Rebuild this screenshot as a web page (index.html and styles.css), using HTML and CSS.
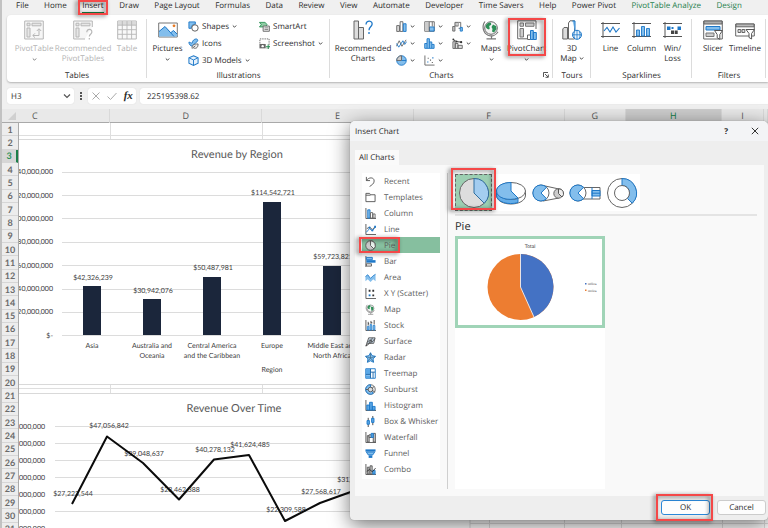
FILE: index.html
```html
<!DOCTYPE html>
<html lang="en">
<head>
<meta charset="utf-8">
<title>Workbook - Insert Chart</title>
<link rel="stylesheet" href="styles.css">
</head>
<body>
<svg class="defs" aria-hidden="true">
  <symbol id="chev" viewBox="0 0 5 5"><path d="M.8 1.5 2.5 3.2 4.2 1.5" fill="none" stroke="#444"/></symbol>
  <symbol id="pivot" viewBox="0 0 20 20"><path d="M.7 1h18.6v18H.7z" fill="#f3f3f3" stroke="#999"/><path d="M3 3.2h3v2.6H3zM8 3.2h9v2.6H8zM3 8h3v9H3z" fill="#ddd" stroke="#999"/><path d="M9 15.5h6V9M12.8 11 15 8.700l2.200 2.300M11 13.300 8.800 15.500 11 17.700" fill="none" stroke="#999"/></symbol>
  <symbol id="recpivot" viewBox="0 0 20 20"><path d="M19.300 7V1H.7v18H12" fill="#f3f3f3" stroke="#999"/><path d="M3 3.200h3v2.600H3zM8 3.200h9v2.600H8zM3 8h3v9H3z" fill="#ddd" stroke="#999"/><path d="M13.800 12.200c0-4 5.600-3.600 5 .2-.3 1.900-2.500 2-2.500 4.200M16.300 18v1.500" fill="none" stroke="#999" stroke-width="1.200"/></symbol>
  <symbol id="table" viewBox="0 0 20 20"><path d="M.7 1h18.600v18H.7z" fill="#f7f7f7" stroke="#999"/><path d="M1 1.500h18v3.500H1z" fill="#ccc"/><path d="M.7 5.200h18.600M.7 9.700h18.600M.7 14.300h18.600M5.300 1v18M10 1v18M14.600 1v18" stroke="#999" stroke-width=".9"/></symbol>
  <symbol id="pictures" viewBox="0 0 20 20"><path d="M.7 3h18.600v14H.7z" fill="#fff" stroke="#777"/><path d="M1 16.500v-5L7 6.500l6 6 2.500-2 3.700 3.500v2.500z" fill="#83beec"/><path d="M1 11.500 7 6.500l9 10M13 12.500l2.500-2L19 14" fill="none" stroke="#1e78c8"/><circle cx="16" cy="5.800" r="1.400" fill="#e87a22"/></symbol>
  <symbol id="shapes" viewBox="0 0 12 12"><path d="M1 1h7v2.500A4 4 0 0 0 3.500 8H1z" fill="#83beec" stroke="#1e78c8"/><circle cx="7.600" cy="7.600" r="3.500" fill="#fff" stroke="#555"/></symbol>
  <symbol id="icons" viewBox="0 0 12 12"><path d="M1 4.500c2 0 2 1.500 3.500 1 .5-3 2.500-4.500 4.500-4.500 2 .3 2 2 1 3L8 5.500 5 9C2.500 8.500 1 7 1 4.500z" fill="#83beec" stroke="#1e78c8"/><path d="M4.500 11.500c-.5-4 2-5 6.500-5 0 3.500-1.500 5.500-5 4.500M5 11l3-2.500" fill="#eee" stroke="#555" stroke-width=".9"/></symbol>
  <symbol id="cube" viewBox="0 0 12 12"><path d="M6 .8 11 3v6L6 11.300 1 9V3z" fill="#e7f2fc" stroke="#1e78c8" stroke-width="1.100"/><path d="M1.300 3.200 6 5.400l4.700-2.200M6 5.400V11" fill="none" stroke="#1e78c8"/></symbol>
  <symbol id="smartart" viewBox="0 0 12 12"><path d="M.5 1.500h6L9 4 6.500 6.500H.5L2.500 4z" fill="#8fcca4" stroke="#1d8a4a" stroke-width=".9"/><path d="M4.500 5.500h6.800v5.700H4.500z" fill="#eee" stroke="#666"/><path d="M6 7.500h4M6 9.300h4" stroke="#666" stroke-width=".8"/></symbol>
  <symbol id="shot" viewBox="0 0 12 12"><path d="M1 6V1h10v10H8" fill="none" stroke="#666" stroke-dasharray="1.500 1"/><path d="M.5 6.500h6.800v4.800H.5z" fill="#666"/><circle cx="4" cy="8.900" r="1.300" fill="#fff"/><path d="M10 7v5M7.500 9.500h4.500" stroke="#1d8a4a"/></symbol>
  <symbol id="recchart" viewBox="0 0 20 20"><path d="M1 1h4.500v18H1zM5.500 7.500h5V19h-5z" fill="#ddd" stroke="#666"/><path d="M13 4.500c.3-5 7-4 6 .2-.5 2.200-3 2.300-3 5.500M16 12v2" fill="none" stroke="#1e78c8" stroke-width="1.300"/></symbol>
  <symbol id="colchart" viewBox="0 0 12 12"><path d="M.8 5h3v6.400h-3z" fill="#ddd" stroke="#666"/><path d="M4.500.8h3v10.600h-3z" fill="#fff" stroke="#666"/><path d="M8 3h3v8.400H8z" fill="#83beec" stroke="#1e78c8"/></symbol>
  <symbol id="linechart" viewBox="0 0 12 12"><path d="M.5 9 3.500 3l3 6 4.500-7" fill="none" stroke="#666"/><path d="M.5 6 3 10l4.500-7L9.500 7l2-3" fill="none" stroke="#1e78c8"/></symbol>
  <symbol id="piechart" viewBox="0 0 12 12"><circle cx="6" cy="6" r="5.200" fill="#83beec" stroke="#1e78c8"/><path d="M6 .8A5.200 5.200 0 0 0 .8 6H6z" fill="#ccc" stroke="#666"/><path d="M6 6h5" stroke="#1e78c8"/></symbol>
  <symbol id="hier" viewBox="0 0 12 12"><path d="M.8.8h10.400v10.400H.8z" fill="#fff" stroke="#666"/><path d="M1 1h4.500v10H1z" fill="#ccc"/><path d="M6 6.500h5v4.500H6z" fill="#83beec" stroke="#1e78c8"/><path d="M5.700 1v10M9 1v5" stroke="#666"/></symbol>
  <symbol id="stat" viewBox="0 0 12 12"><path d="M.8 11.300V6h2.500V.8h2.600v3.500h2.600V7h2.500v4.300z" fill="#83beec" stroke="#1e78c8"/><path d="M3.300 6v5M5.900 4v7M8.500 7v4" stroke="#1e78c8"/></symbol>
  <symbol id="scatter" viewBox="0 0 12 12"><path d="M1 .5V11h10.500" fill="none" stroke="#666"/><path d="M3.500 7h1.300v1.300H3.500zM9 2.500h1.300v1.300H9z" fill="#1e78c8"/><path d="M4 3h1.200v1.200H4zM6.500 5h1.200v1.200H6.500zM8.500 7.500h1.200v1.200H8.500z" fill="#666"/></symbol>
  <symbol id="fall" viewBox="0 0 12 12"><path d="M.8 6h2.400v5H.8zM3.200 1.500h4v4h-4z" fill="#ccc" stroke="#666"/><path d="M7.200 1.500h2.300V8H7.200" fill="#fff" stroke="#666"/><path d="M9 7h2.300v4H9z" fill="#83beec" stroke="#1e78c8"/></symbol>
  <symbol id="combo" viewBox="0 0 12 12"><path d="M1 4h2.500v7.400H1zM3.500 6h3v5.400h-3zM6.500 8h4.700v3.400H6.500z" fill="#ddd" stroke="#666"/><path d="M1 1.500 5 4l5.500.5" fill="none" stroke="#333"/><circle cx="1.500" cy="1.500" r="1" fill="#333"/><circle cx="5" cy="3.800" r="1" fill="#333"/><circle cx="10" cy="4.500" r="1.200" fill="#333"/></symbol>
  <symbol id="globe" viewBox="0 0 20 20"><circle cx="10" cy="8" r="6.300" fill="#f5f5f5" stroke="#666"/><path d="M5 5c2-3 5-3 5-2s1 2-1 2.500 1 3-1 4c-2-.5-4-2-3-4.500zM12 4.500l3 1.500.5 3-2.500 3.500-2-1 .5-2.500-1-2z" fill="#2c8f57"/><path d="M4 1.500C.5 6 2 13 7 15.200c4 1.500 8 0 10-3.500M10.500 16v2.500M5.500 18.800h9.500" fill="none" stroke="#777" stroke-width="1.200"/></symbol>
  <symbol id="pivotchart" viewBox="0 0 20 20"><path d="M19 9V.8H.7v18H10" fill="#fff" stroke="#666"/><path d="M3 3h3.500v3.300H3zM8.500 3H17v3.300H8.500zM3 8.500h3.500V17H3z" fill="#ccc" stroke="#777"/><path d="M10.500 15h3v4.500h-3z" fill="#fff" stroke="#666"/><path d="M13.500 10.500h2.800v9h-2.800zM16.300 12.500h3v7h-3z" fill="#83beec" stroke="#1e78c8"/></symbol>
  <symbol id="map3d" viewBox="0 0 20 20"><path d="M.8 9 2 7.500h3.500V19H.8z" fill="#ddd" stroke="#666"/><path d="M6.500 3 8 .8h4.500V19h-6z" fill="#fff" stroke="#666"/><path d="M10.500 1h2.500v10" fill="#83beec" stroke="#1e78c8"/><circle cx="15" cy="14.800" r="4.500" fill="#e8f3fc" stroke="#1e78c8"/><path d="M10.500 14.800h9M15 10.300v9M12.700 11.500c-1 2-1 5 0 7M17.300 11.500c1 2 1 5 0 7" fill="none" stroke="#1e78c8" stroke-width=".8"/></symbol>
  <symbol id="spline" viewBox="0 0 20 20"><path d="M2 2v16M0 3.500h19M0 16.500h19" stroke="#555" fill="none"/><path d="M3 11l3-3.500 3 4.500 3-5 3 5 3.500-4" fill="none" stroke="#1e78c8" stroke-width="1.100"/></symbol>
  <symbol id="spcol" viewBox="0 0 20 20"><path d="M2 2v16M0 3.500h19M0 16.500h19" stroke="#555"/><path d="M4.500 10h3v6h-3zM9.500 6.500h3V16h-3zM14.500 8.500h3V16h-3z" fill="#83beec" stroke="#1e78c8" stroke-width=".9"/></symbol>
  <symbol id="spwin" viewBox="0 0 20 20"><path d="M2 2v16M0 3.500h19M0 16.500h19" stroke="#555"/><path d="M4 6.500h3.500v3.500H4zM14.500 6.500H18v3.500h-3.500z" fill="#1e78c8"/><path d="M8 10.500h3V14H8zM11.700 10.500h3V14h-3z" fill="#444"/><path d="M8.500 7h2v2h-2z" fill="#1e78c8"/></symbol>
  <symbol id="slicer" viewBox="0 0 20 20"><path d="M.7 1h18.600v18H.7z" fill="#fff" stroke="#666"/><path d="M1 1h18v3H1z" fill="#aaa" stroke="#666"/><path d="M3 6.500h14V10H3z" fill="#83beec" stroke="#1e78c8"/><path d="M3 13h8v3.500H3z" fill="#ccc" stroke="#777"/><path d="M11.500 10.500h8l-2.700 4v4.800l-2.600-1.500v-3.300z" fill="#fff" stroke="#555"/></symbol>
  <symbol id="timeline" viewBox="0 0 20 20"><path d="M.7 4h18.600v12H.7z" fill="#fff" stroke="#666"/><path d="M1 4h18v2.800H1z" fill="#bbb" stroke="#666"/><path d="M3 9.500h2.800v3H3zM7 9.500h2.800v3H7z" fill="#ddd" stroke="#666"/><path d="M11 9.500h8.500l-2.900 4V19l-2.600-1.500v-4z" fill="#fff" stroke="#555"/></symbol>
</svg>

<div class="screen">
  <div class="edge" aria-hidden="true"></div>
  <div class="app">
    <nav class="tabs" aria-label="Ribbon tabs">
      <a href="#">File</a><a href="#">Home</a><a href="#" class="active">Insert<span class="mark mark-tab"></span></a><a href="#">Draw</a><a href="#">Page Layout</a><a href="#">Formulas</a><a href="#">Data</a><a href="#">Review</a><a href="#">View</a><a href="#">Automate</a><a href="#">Developer</a><a href="#">Time Savers</a><a href="#">Help</a><a href="#">Power Pivot</a><a href="#" class="context">PivotTable Analyze</a><a href="#" class="context">Design</a>
    </nav>

    <div class="ribbon">
      <section class="group">
        <div class="tools tables">
          <button class="big" disabled><svg><use href="#pivot"/></svg><span>PivotTable</span><svg class="chev"><use href="#chev"/></svg></button>
          <button class="big" disabled><svg><use href="#recpivot"/></svg><span>Recommended<br>PivotTables</span></button>
          <button class="big" disabled><svg><use href="#table"/></svg><span>Table</span></button>
        </div>
        <h2>Tables</h2>
      </section>
      <section class="group">
        <div class="tools illus">
          <button class="big"><svg><use href="#pictures"/></svg><span>Pictures</span><svg class="chev"><use href="#chev"/></svg></button>
          <div class="stack">
            <button class="small"><svg><use href="#shapes"/></svg>Shapes<svg class="chev"><use href="#chev"/></svg></button>
            <button class="small"><svg><use href="#icons"/></svg>Icons</button>
            <button class="small"><svg><use href="#cube"/></svg>3D Models<svg class="chev"><use href="#chev"/></svg></button>
          </div>
          <div class="stack">
            <button class="small"><svg><use href="#smartart"/></svg>SmartArt</button>
            <button class="small"><svg><use href="#shot"/></svg>Screenshot<svg class="chev"><use href="#chev"/></svg></button>
          </div>
        </div>
        <h2>Illustrations</h2>
      </section>
      <section class="group">
        <div class="tools charts">
          <button class="big"><svg><use href="#recchart"/></svg><span>Recommended<br>Charts</span></button>
          <div class="matrix">
            <button class="small" aria-label="Column chart"><svg><use href="#colchart"/></svg><svg class="chev"><use href="#chev"/></svg></button>
            <button class="small" aria-label="Hierarchy chart"><svg><use href="#hier"/></svg><svg class="chev"><use href="#chev"/></svg></button>
            <button class="small" aria-label="Waterfall chart"><svg><use href="#fall"/></svg><svg class="chev"><use href="#chev"/></svg></button>
            <button class="small" aria-label="Line chart"><svg><use href="#linechart"/></svg><svg class="chev"><use href="#chev"/></svg></button>
            <button class="small" aria-label="Statistic chart"><svg><use href="#stat"/></svg><svg class="chev"><use href="#chev"/></svg></button>
            <button class="small" aria-label="Combo chart"><svg><use href="#combo"/></svg><svg class="chev"><use href="#chev"/></svg></button>
            <button class="small" aria-label="Pie chart"><svg><use href="#piechart"/></svg><svg class="chev"><use href="#chev"/></svg></button>
            <button class="small" aria-label="Scatter chart"><svg><use href="#scatter"/></svg><svg class="chev"><use href="#chev"/></svg></button>
          </div>
          <button class="big"><svg><use href="#globe"/></svg><span>Maps</span><svg class="chev"><use href="#chev"/></svg></button>
          <button class="big"><svg><use href="#pivotchart"/></svg><span>PivotChart</span><svg class="chev"><use href="#chev"/></svg><span class="mark mark-big"></span></button>
        </div>
        <h2>Charts</h2>
        <button class="launcher" aria-label="Chart options"><svg viewBox="0 0 6 6"><path d="M.5 5V.5H5M2 2l3 3M5.300 2.500v2.800H2.500" fill="none" stroke="#444" stroke-width=".9"/></svg></button>
      </section>
      <section class="group">
        <div class="tools tours">
          <button class="big"><svg><use href="#map3d"/></svg><span>3D<br>Map <svg class="chev"><use href="#chev"/></svg></span></button>
        </div>
        <h2>Tours</h2>
      </section>
      <section class="group">
        <div class="tools spark">
          <button class="big"><svg><use href="#spline"/></svg><span>Line</span></button>
          <button class="big"><svg><use href="#spcol"/></svg><span>Column</span></button>
          <button class="big"><svg><use href="#spwin"/></svg><span>Win/<br>Loss</span></button>
        </div>
        <h2>Sparklines</h2>
      </section>
      <section class="group">
        <div class="tools filters">
          <button class="big"><svg><use href="#slicer"/></svg><span>Slicer</span></button>
          <button class="big"><svg><use href="#timeline"/></svg><span>Timeline</span></button>
        </div>
        <h2>Filters</h2>
      </section>
    </div>

    <div class="formula-bar">
      <div class="name-box"><input type="text" value="H3" aria-label="Name box"><svg viewBox="0 0 8 8"><path d="M1 2.500 4 5.500 7 2.500" fill="none" stroke="#555" stroke-width="1.200"/></svg></div>
      <svg class="dots" viewBox="0 0 2 8"><path d="M0 0h2v2H0zM0 3h2v2H0zM0 6h2v2H0z" fill="#555"/></svg>
      <div class="fx-box">
        <button aria-label="Cancel entry"><svg viewBox="0 0 10 10"><path d="m1.500 1.500 7 7M8.500 1.500l-7 7" stroke="#aaa"/></svg></button>
        <button aria-label="Confirm entry"><svg viewBox="0 0 10 10"><path d="M.5 5.500 3.500 8.500 9.500 2" fill="none" stroke="#aaa"/></svg></button>
        <button class="fx">fx</button>
      </div>
      <input class="formula" type="text" value="225195398.62" aria-label="Formula bar">
    </div>

    <div class="columns">
      <div class="corner"><svg viewBox="0 0 8 8"><path d="M8 0v8H0z" fill="#d0d0d0"/></svg></div>
      <span class="partial">C</span><span>D</span><span>E</span><span>F</span><span>G</span><span class="sel">H</span><span>I</span><span></span>
    </div>

    <div class="sheet">
      <div class="rows">
        <span>1</span><span>2</span><span class="sel">3</span><span>4</span><span>5</span><span>6</span><span>7</span><span>8</span><span>9</span><span>10</span><span>11</span><span>12</span><span>13</span><span>14</span><span>15</span><span>16</span><span>17</span><span>18</span><span>19</span><span>20</span><span>21</span><span>22</span><span>23</span><span>24</span><span>25</span><span>26</span><span>27</span><span>28</span><span>29</span><span>30</span><span>31</span>
      </div>
      <div class="cells">
        <svg class="plot" width="749" height="413" viewBox="19 123 749 413">
          <path class="cell-line" d="M19 135.500H768M19 388.500H768M110.500 123V536M262.500 123V536M413.500 123V536M489.500 520V536M564.500 123V536M621.500 520V536M722.500 123V536M764.500 123V536M19 523.500H768"/>
          <rect class="object" x="-10" y="139.500" width="480" height="245"/>
          <rect class="object" x="-10" y="393.500" width="480" height="180"/>

          <path class="axis" d="M62 172.500H470M62 195.500H470M62 218.500H470M62 242.500H470M62 265.500H470M62 289.500H470M62 312.500H470M62 335.500H470"/>
          <text class="title" x="237" y="158">Revenue by Region</text>
          <g class="scale"><text x="53" y="174">40,000,000</text><text x="53" y="198">20,000,000</text><text x="53" y="221">00,000,000</text><text x="53" y="244">80,000,000</text><text x="53" y="268">60,000,000</text><text x="53" y="291">40,000,000</text><text x="53" y="314">20,000,000</text><text x="53" y="338">$-</text></g>
          <g class="bars"><rect x="83" y="286" width="18" height="49"/><rect x="143" y="299" width="18" height="36"/><rect x="203" y="277" width="18" height="58"/><rect x="263" y="202" width="18" height="133"/><rect x="323" y="266" width="18" height="69"/></g>
          <g class="label">
            <text x="93" y="280">$42,326,239</text><text x="153" y="293">$30,942,076</text><text x="213" y="270">$50,487,981</text><text x="273" y="195">$114,542,721</text><text x="333" y="259">$59,723,821</text>
            <text x="92" y="348">Asia</text><text x="152" y="348">Australia and</text><text x="152" y="358">Oceania</text><text x="212" y="348">Central America</text><text x="212" y="358">and the Caribbean</text><text x="272" y="348">Europe</text><text x="332" y="348">Middle East and</text><text x="332" y="358">North Africa</text><text class="axis-name" x="272" y="372">Region</text>
          </g>

          <path class="axis" d="M55 426.500H470M55 443.500H470M55 460.500H470M55 477.500H470M55 494.500H470M55 511.500H470"/>
          <text class="title" x="234" y="412">Revenue Over Time</text>
          <g class="scale"><text x="45" y="429">000,000</text><text x="45" y="446">000,000</text><text x="45" y="463">000,000</text><text x="45" y="480">000,000</text><text x="45" y="497">000,000</text><text x="45" y="514">000,000</text><text x="45" y="531">000,000</text></g>
          <g class="label"><text x="73" y="496">$27,223,544</text><text x="109" y="428">$47,056,842</text><text x="144" y="456">$39,048,637</text><text x="180" y="492">$28,462,388</text><text x="215" y="452">$40,278,132</text><text x="250" y="447">$41,624,485</text><text x="286" y="512">$22,309,588</text><text x="321" y="494">$27,568,617</text><text x="357" y="482">$31,204,190</text></g>
          <path class="trend" d="M72 504 107 436.500 143 463 179 499.500 214 459.500 249 455 285 521 320 503 352 491.500"/>
        </svg>
      </div>
    </div>
  </div>

  <div class="dialog" role="dialog" aria-labelledby="dlg-title">
    <header>
      <h1 id="dlg-title">Insert Chart</h1>
      <button class="help" aria-label="Help">?</button>
      <button aria-label="Close"><svg viewBox="0 0 8 8"><path d="m.8.8 6.400 6.400M7.200.8.8 7.200" stroke="#333"/></svg></button>
    </header>
    <div class="dialog-tabs"><button>All Charts</button></div>
    <div class="panel">
      <div class="list">
        <button><svg viewBox="0 0 12 12"><path d="M1.500 1v4h4M1.500 5C4 1 10 1 10 5.500 10 8.500 7 10 5 11.500" fill="none" stroke="#555"/></svg>Recent</button>
        <button><svg viewBox="0 0 12 12"><path d="M1 10.500v-9h4l1 1.500h5v7.500zM1 3.500h5" fill="none" stroke="#555"/></svg>Templates</button>
        <button><svg viewBox="0 0 12 12"><path d="M1 0v11.500h11" fill="none" stroke="#555"/><path d="M3 2h2.500v9H3z" fill="#83beec" stroke="#1e78c8"/><path d="M6 5h2.300v6H6zM8.800 6.500h2.200V11H8.800z" fill="#fff" stroke="#666"/></svg>Column</button>
        <button><svg viewBox="0 0 12 12"><path d="M1 0v11.500h11" fill="none" stroke="#555"/><path d="m1.500 9 3.500-4 3 2.500L11.500 3" fill="none" stroke="#1e78c8"/><path d="m2 5 3-1.500L8 6l3-3" fill="none" stroke="#555"/><path d="M4 3h2v2H4zM7 6h2v2H7zM10 2h2v2h-2z" fill="#1e78c8"/></svg>Line</button>
        <button class="picked"><svg viewBox="0 0 12 12"><circle cx="6" cy="6" r="5.200" fill="#c9c9c9" stroke="#555"/><path d="M6 .8A5.200 5.200 0 0 1 9.700 9.700L6 6z" fill="#e8f1ec" stroke="#555"/></svg>Pie<span class="mark mark-item"></span></button>
        <button><svg viewBox="0 0 12 12"><path d="M1 0v12" stroke="#555"/><path d="M1.500 1.500H8V4H1.500z" fill="#83beec" stroke="#1e78c8"/><path d="M1.500 4.500h10v2.800h-10z" fill="#1e78c8"/><path d="M1.500 8.500H7V11H1.500z" fill="#fff" stroke="#555"/></svg>Bar</button>
        <button><svg viewBox="0 0 12 12"><path d="M.5 10V5L3 3l3 4 3-3 2.500-1.500V10L9 8l-3 3-3-3z" fill="#83beec"/><path d="m.5 5 2.500-2 3 4 3-3 2.500-1.500" fill="none" stroke="#1e78c8" stroke-width=".9"/></svg>Area</button>
        <button><svg viewBox="0 0 12 12"><path d="M1 0v11.500h11" fill="none" stroke="#555"/><path d="M4 2h2v2H4zM8 2h2v2H8zM8 7h2v2H8z" fill="#333"/><path d="M4 7h2v2H4z" fill="#1e78c8"/></svg>X Y (Scatter)</button>
        <button><svg viewBox="0 0 20 20"><use href="#globe"/></svg>Map</button>
        <button><svg viewBox="0 0 12 12"><path d="M1 0v11.500h11" fill="none" stroke="#555"/><path d="M2.500 7h1.800v4H2.500zM5.500 5h1.800v6H5.500zM8.800 6h2v5h-2z" fill="#83beec" stroke="#1e78c8" stroke-width=".8"/><path d="M3.500 2v4M6.500 1v3M10 0v5M3.500 4h1M6.500 3h1.500" stroke="#333" stroke-width=".9"/></svg>Stock</button>
        <button><svg viewBox="0 0 12 12"><path d="M1 11 4 2h7l-1.500 6H3z" fill="#cfe3f5" stroke="#555"/><path d="m2.500 7 3-3 2 3 3-4M1 11l3-2 2-5M6 8l2-6" fill="none" stroke="#444" stroke-width=".9"/></svg>Surface</button>
        <button><svg viewBox="0 0 12 12"><path d="m6 .8 1.700 3.200 3.800.7-2.700 2.800.6 3.800L6 9.600l-3.400 1.700.6-3.800L.5 4.700 4.300 4z" fill="#83beec" stroke="#1e78c8"/><path d="M6 1v5.500L11 5M6 6.500l3 4M6 6.500l-3 4M6 6.500 1 5" stroke="#35617f" stroke-width=".7" fill="none"/></svg>Radar</button>
        <button><svg viewBox="0 0 12 12"><path d="M.8.8h10.400v10.400H.8z" fill="#fff" stroke="#1e78c8"/><path d="M1 1h5v6H1zM1 8h5v3H1z" fill="#5aa7e6"/><path d="M6 1v10M1 7h5M6 4.500h5M8.800 4.500V11" stroke="#1b66a8"/></svg>Treemap</button>
        <button><svg viewBox="0 0 12 12"><circle cx="6" cy="6" r="5.200" fill="#eee" stroke="#666"/><path d="M6 .8a5.200 5.200 0 1 0 3 9.400L6 6z" fill="#83beec" stroke="#1e78c8"/><circle cx="6" cy="6" r="2.500" fill="#ddd" stroke="#555"/><path d="m8 7 3 2M8 4.500 10 2.500M3.500 6H1" stroke="#555"/></svg>Sunburst</button>
        <button><svg viewBox="0 0 12 12"><path d="M1 0v11.500h11" fill="none" stroke="#555"/><path d="M2 5.500h3V11H2zM5 2.500h3V11H5zM8 7h3v4H8z" fill="#5aa7e6" stroke="#1e78c8"/></svg>Histogram</button>
        <button><svg viewBox="0 0 12 12"><path d="M3.500 2v10M8.500 0v10" stroke="#444"/><path d="M2.200 5h2.600v4H2.200zM7.200 2.500h2.600v4.500H7.200z" fill="#5aa7e6" stroke="#1e78c8"/></svg>Box &amp; Whisker</button>
        <button><svg viewBox="0 0 12 12"><path d="M1 0v11.500h11" fill="none" stroke="#555"/><path d="M2.500 4h2v7h-2zM9 1.500h2.300V11H9z" fill="#ccc" stroke="#555"/><path d="M4.500 3h2.200v3H4.500z" fill="#fff" stroke="#555"/><path d="M6.700 1.500H9V6H6.700z" fill="#5aa7e6" stroke="#1e78c8"/></svg>Waterfall</button>
        <button><svg viewBox="0 0 12 12"><path d="M.5 1.500h11V4H.5z" fill="#1e78c8"/><path d="M1.500 4.500h9L8.500 7.500h-5z" fill="#83beec" stroke="#1e78c8"/><path d="M4 8h4v2.800H4z" fill="#1e78c8"/></svg>Funnel</button>
        <button><svg viewBox="0 0 12 12"><path d="M1 0v11.500h11" fill="none" stroke="#555"/><path d="M2.500 3.500h2V11h-2zM5.500 2h2.300v9H5.500z" fill="#ccc" stroke="#555"/><path d="M8.500 7H11v4H8.500z" fill="#5aa7e6" stroke="#1e78c8"/><path d="m2 8 3-2 3 2.500 3.500-4" fill="none" stroke="#333"/></svg>Combo</button>
      </div>
      <div class="detail">
        <div class="types">
          <button class="picked" aria-label="Pie"><svg viewBox="0 0 32 32"><circle cx="16" cy="16" r="14.500" fill="#ddd" stroke="#666"/><path d="M16 1.500A14.500 14.500 0 0 1 26.250 26.250L16 16z" fill="#a3cdf0" stroke="#2f6f9f"/></svg><span class="mark mark-type"></span></button>
          <button aria-label="3-D Pie"><svg viewBox="0 0 32 32"><path d="M1.500 14v4c0 12 29 12 29 0v-4z" fill="#fff" stroke="#666"/><path d="M1.500 14v4c0 7 12 10.500 21.500 7.500v-4.500z" fill="#64ade8" stroke="#1e78c8"/><ellipse cx="16" cy="14" rx="14.500" ry="8.500" fill="#fff" stroke="#666"/><path d="M16 5.500C8 5.500 1.500 9 1.500 14c0 7 12 10.500 21.500 7L16 14z" fill="#83beec" stroke="#1e78c8"/></svg></button>
          <button aria-label="Pie of Pie"><svg viewBox="0 0 32 32"><path d="M11 8.500 27 12M11 24l16-3" stroke="#666"/><circle cx="9" cy="16" r="8" fill="#fff" stroke="#666"/><path d="M14.500 10.300a8 8 0 1 0 0 11.400L9 16z" fill="#83beec" stroke="#1e78c8"/><circle cx="26.500" cy="16.500" r="4.700" fill="#ccc" stroke="#666"/><path d="M26.500 11.800v4.700l3.500 3.500a4.700 4.700 0 0 0-3.500-8.200z" fill="#eee" stroke="#555"/></svg></button>
          <button aria-label="Bar of Pie"><svg viewBox="0 0 32 32"><path d="M11 10.500h20v11.500H11z" fill="#fff" stroke="#666"/><circle cx="9" cy="16" r="8" fill="#fff" stroke="#666"/><path d="M14.500 10.300a8 8 0 1 0 0 11.400L9 16z" fill="#83beec" stroke="#1e78c8"/><path d="M23 13.500h8v5.500h-8z" fill="#83beec" stroke="#1e78c8"/><path d="M23 10.500V22M23 16.200h8" stroke="#1e78c8"/></svg></button>
          <button aria-label="Doughnut"><svg viewBox="0 0 32 32"><circle cx="16" cy="16" r="14.500" fill="#fff" stroke="#666"/><path d="M16 1.500A14.500 14.500 0 0 1 26.250 26.250L21.300 21.300A7.500 7.500 0 0 0 16 8.500z" fill="#83beec" stroke="#1e78c8"/><circle cx="16" cy="16" r="7.500" fill="#fff" stroke="#666"/></svg></button>
        </div>
        <hr>
        <h2>Pie</h2>
        <div class="previews">
          <button class="preview" aria-label="Pie preview">
            <svg viewBox="0 0 144 86"><circle cx="62.500" cy="48" r="33" fill="#ed7d31"/><path d="M62.500 15A33 33 0 0 1 76 78.100L62.500 48z" fill="#4472c4"/><path d="M62.500 15v33L76 78.100" fill="none" stroke="#fff" stroke-width=".8"/><text x="72" y="9" class="total">Total</text><path d="M127 44h1.500v1.500H127z" fill="#4472c4"/><path d="M127 50.500h1.500V52H127z" fill="#ed7d31"/><text x="130" y="46" class="key">Offline</text><text x="130" y="53" class="key">Online</text></svg>
          </button>
        </div>
      </div>
    </div>
    <footer>
      <button class="ok">OK<span class="mark mark-ok"></span></button>
      <button>Cancel</button>
    </footer>
  </div>
</div>
</body>
</html>
```
FILE: styles.css
```css
* { box-sizing: border-box; }
body {
  margin: 0;
  font: 8px/11px "Open Sans", "Noto Sans", sans-serif;
  text-rendering: geometricPrecision;
  color: #2b2b2b;
}
button, input { font: inherit; color: inherit; border: 0; padding: 0; margin: 0; background: none; text-rendering: inherit; }
h1, h2 { margin: 0; font-size: inherit; font-weight: 400; }
a { color: inherit; text-decoration: none; }
svg { display: block; flex: none; }
.defs { position: absolute; width: 0; height: 0; }

.screen { position: relative; display: flex; height: 100vh; overflow: hidden; background: #f0f0f0; }
.edge { flex: none; width: 2px; background: #c2c2c2; }
.app { flex: 1; min-width: 0; display: flex; flex-direction: column; }

/* highlight frames */
.mark {
  position: absolute;
  z-index: 2;
  border: 2px solid #f44848;
  filter: drop-shadow(-2px 1px 2px rgba(0, 0, 0, .6));
  pointer-events: none;
}
.mark-tab { inset: 0 -4px -3px -4px; }
.mark-big { inset: -2px 0 14px 1px; }
.mark-item { inset: 0 40px 0 -3px; }
.mark-type { inset: -6px -4px 1px -4px; }
.mark-ok { inset: -7px -4px -7px -6px; }

/* ribbon */
.tabs { display: flex; justify-content: space-between; padding: 0 26px 0 14px; height: 15px; }
.tabs a { position: relative; height: 13px; white-space: nowrap; }
.tabs .active { color: #222; border-bottom: 1px solid #107c41; }
.tabs .context { color: #1f7f4c; }

.ribbon {
  display: grid;
  grid-template-columns: 140fr 183fr 223fr 38fr 101fr 74fr;
  margin-left: 5px;
  padding-right: 2px;
  height: 67px;
  background: #fff;
  border-radius: 4px 0 0 4px;
  box-shadow: 0 1px 2px rgba(0, 0, 0, .25);
}
.group { position: relative; display: flex; flex-direction: column; padding-top: 5px; min-width: 0; }
.group::after { content: ""; position: absolute; right: 0; top: 4px; bottom: 4px; width: 1px; background: #dcdcdc; }
.group h2 { text-align: center; }
.tools { display: flex; height: 50px; }
.tables { padding-left: 7px; }
.illus { padding-left: 5px; }
.charts { padding-left: 4px; }
.spark, .filters { justify-content: center; }
.tours { justify-content: center; }
.big { position: relative; display: flex; flex-direction: column; align-items: center; white-space: nowrap; }
.big > svg { width: 20px; height: 20px; }
.big > span:not(.mark) { margin-top: 4px; line-height: 10px; }
.big:disabled { color: #b4b4b4; }
.big:disabled svg { opacity: .7; }
.chev, .big > .chev { width: 5px; height: 5px; }
.big > .chev { margin-top: 3px; }
.big span .chev { display: inline-block; }
.tables .big:nth-child(1) { width: 40px; }
.tables .big:nth-child(2) { width: 58px; }
.tables .big:nth-child(3) { width: 30px; }
.illus .big { width: 31px; }
.stack { margin-left: 5px; width: 66px; }
.small { display: flex; align-items: center; gap: 3px; height: 17px; white-space: nowrap; }
.small > svg:first-child { width: 11px; height: 11px; }
.stack, .matrix { margin-top: -2px; }
.charts .big:nth-child(1) { width: 58px; }
.matrix { display: grid; grid-template-columns: repeat(3, 28px); grid-auto-rows: 17px; margin-left: 4px; align-content: start; }
.charts .big:nth-child(3) { width: 22px; }
.charts .big:nth-child(4) { width: 39px; margin-left: 5px; }
.spark .big { width: 31px; }
.filters .big { width: 32px; }
.launcher { position: absolute; right: 4px; bottom: 4px; }
.launcher svg { width: 6px; height: 6px; }

/* formula bar */
.formula-bar { display: flex; align-items: center; margin: 6px 0 0 5px; height: 16px; }
.name-box, .fx-box, .formula { height: 16px; background: #fff; border-radius: 3px; box-shadow: 0 0 1px #ccc; }
.name-box { display: flex; align-items: center; width: 67px; padding: 0 3px 0 4px; }
.name-box input { flex: 1; min-width: 0; }
.name-box svg { width: 8px; height: 8px; }
.dots { width: 2px; height: 8px; margin: 0 6px; }
.fx-box { display: flex; align-items: center; justify-content: space-around; width: 48px; }
.fx-box svg { width: 10px; height: 10px; }
.fx { font: italic 700 11px/12px "Liberation Serif", serif; }
.formula { flex: 1; min-width: 0; margin-left: 4px; padding-left: 7px; border-radius: 3px 0 0 3px; }

/* worksheet */
.columns {
  display: grid;
  grid-template-columns: 17px 91fr 152fr 151fr 151fr 61fr 96fr 42fr 4fr;
  margin-top: 5px;
  height: 14px;
  background: #e9e9e9;
  border-bottom: 1px solid #a9a9a9;
  text-align: center;
  font-size: 9px;
  line-height: 14px;
  color: #555;
}
.columns span { border-right: 1px solid #d9d9d9; }
.columns .partial { padding-left: 13px; text-align: left; }
.columns .sel { background: #cdcdcd; color: #107c41; }
.corner { display: flex; justify-content: flex-end; align-items: center; padding-right: 3px; }
.corner svg { width: 8px; height: 8px; }
.sheet { flex: 1; min-height: 0; display: flex; overflow: hidden; }
.rows {
  flex: none;
  display: grid;
  grid-template-rows: repeat(31, 1fr);
  width: 17px;
  height: 413px;
  background: #ededed;
  border-right: 1px solid #aaa;
  font-family: Lato, sans-serif;
  font-size: 9px;
  font-weight: 700;
  color: #6a6a6a;
}
.rows span { display: flex; align-items: center; justify-content: center; border-bottom: 1px solid #d6d6d6; }
.rows .sel { background: #d6d6d6; color: #2c9258; border-right: 2px solid #1d7f49; }
.cells { flex: 1; min-width: 0; overflow: hidden; background: #fff; }
.plot text { font: 7px Lato, sans-serif; fill: #404040; }
.cell-line { stroke: #dedede; fill: none; }
.object { fill: #fff; stroke: #d9d9d9; }
.axis { stroke: #dcdcdc; fill: none; }
.plot .title { font-size: 11px; fill: #595959; text-anchor: middle; }
.scale text { text-anchor: end; }
.label text { text-anchor: middle; }
.bars { fill: #1b263b; }
.trend { fill: none; stroke: #0b0b0b; stroke-width: 2; stroke-linejoin: round; }

/* dialog */
.dialog {
  position: absolute;
  left: 350px;
  right: 0;
  top: 121px;
  background: #eee;
  border-radius: 5px 5px 4px 4px;
  box-shadow: 0 0 1px #777, 0 5px 20px rgba(0, 0, 0, .55);
}
.dialog header { display: flex; align-items: center; height: 20px; padding: 0 9px 0 5px; background: #f3f4f6; border-radius: 5px 5px 0 0; }
.dialog h1 { flex: 1; }
.help { margin-right: 23px; font-weight: 700; }
.dialog header svg { width: 8px; height: 8px; }
.dialog-tabs { padding: 9px 0 0 5px; }
.dialog-tabs button { display: block; height: 15px; padding: 0 4px; background: #fafafa; }
.panel { display: flex; margin: 0 4px 0 5px; padding: 8px 7px 7px; background: #f9f9f9; }
.list { width: 78px; height: 306px; background: #fff; }
.list button {
  position: relative;
  display: flex;
  align-items: center;
  gap: 8px;
  width: 100%;
  height: 16px;
  padding-left: 3px;
  color: #5c5c5c;
  white-space: nowrap;
}
.list svg { width: 11px; height: 11px; }
.list .picked { background: #86bf9f; }
.detail { flex: 1; display: flex; flex-direction: column; height: 316px; margin-left: 7px; padding-left: 7px; border-left: 1px solid #cfcfcf; }
.types { display: flex; align-self: flex-start; margin-top: 1px; background: #fff; }
.types button { position: relative; display: flex; align-items: center; justify-content: center; width: 37px; height: 37px; }
.types svg { width: 32px; height: 32px; }
.types .picked { background: #9ccfb2; outline: 1px dashed #666; outline-offset: -1px; }
hr { width: 100%; height: 2px; margin: 3px 0 4px; border: 0; background: #e4e4e4; }
.detail h2 { font-size: 11px; line-height: 14px; }
.previews { flex: 1; width: 150px; margin-top: 2px; background: #fff; }
.preview { display: block; width: 150px; border: 3px solid #a0d4b7; }
.preview svg { width: 100%; }
.total { font: 5px "Liberation Sans", sans-serif; fill: #444; text-anchor: middle; }
.key { font: 3px "Liberation Sans", sans-serif; fill: #444; }
.dialog footer { display: flex; justify-content: flex-end; gap: 7px; padding: 4px 2px 5px; }
.dialog footer button { position: relative; width: 49px; height: 15px; background: #fdfdfd; border: 1px solid #ccc; border-radius: 3px; }
.dialog footer .ok { border-color: #2b88d8; }
```
